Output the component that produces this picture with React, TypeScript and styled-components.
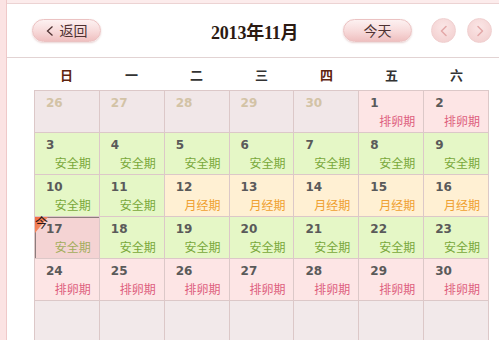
import React from "react";
import styled, { createGlobalStyle } from "styled-components";

const Global = createGlobalStyle`
  html, body { margin: 0; padding: 0; background: #ffffff; }
  body { font-family: "Liberation Sans", "Noto Sans CJK SC", sans-serif; }
  * { box-sizing: border-box; }
`;

const Page = styled.div`
  display: flex;
  width: 499px;
  height: 340px;
  overflow: hidden;
  background: #ffffff;
`;

const SideStrip = styled.div`
  width: 7px;
  flex: none;
  background: #fbe3e3;
  border-right: 1px solid #efc9c9;
`;

const Main = styled.div`
  flex: 1;
  display: flex;
  flex-direction: column;
`;

const TopStrip = styled.div`
  height: 4px;
  flex: none;
  background: #fcecec;
  border-bottom: 1px solid #ecd3d3;
`;

const Header = styled.div`
  height: 54px;
  flex: none;
  display: flex;
  align-items: center;
  padding-left: 25px;
  border-bottom: 1px solid #e2d3d3;
`;

const PillButton = styled.button<{ $w: number }>`
  width: ${(p) => p.$w}px;
  height: 23px;
  border-radius: 12px;
  border: 1px solid #ebc2c2;
  background: linear-gradient(#fdf1f1, #f7d9d9 55%, #efc0c0);
  box-shadow: 0 1px 2px rgba(190, 130, 130, 0.35);
  color: #4e3232;
  font-family: "Noto Sans CJK SC", sans-serif;
  font-size: 14px;
  line-height: 21px;
  padding: 0;
  display: flex;
  align-items: center;
  justify-content: center;
  gap: 6px;
  cursor: pointer;
`;

const Title = styled.div`
  margin-left: 110px;
  width: 92px;
  font-family: "Liberation Serif", "Noto Sans CJK SC", serif;
  font-weight: bold;
  font-size: 18px;
  color: #2b1a12;
  white-space: nowrap;
  letter-spacing: -0.2px;
`;

const TodayGap = styled.div`
  width: 40px;
`;

const CircleButton = styled.button<{ $ml: number }>`
  margin-left: ${(p) => p.$ml}px;
  width: 25px;
  height: 25px;
  border-radius: 50%;
  border: 1px solid #f0d0d0;
  background: radial-gradient(circle at 50% 35%, #fbe6e6, #f1cccc);
  padding: 0;
  display: flex;
  align-items: center;
  justify-content: center;
`;

const WeekRow = styled.div`
  height: 32px;
  flex: none;
  margin-left: 27px;
  width: 455px;
  display: grid;
  grid-template-columns: repeat(7, 1fr);
  align-items: center;
`;

const WeekLabel = styled.div<{ $brown?: boolean }>`
  text-align: center;
  font-family: "Noto Sans CJK SC", sans-serif;
  font-weight: bold;
  font-size: 13px;
  color: ${(p) => (p.$brown ? "#5e2410" : "#333333")};
`;

const Grid = styled.div`
  margin-left: 27px;
  width: 455px;
  display: grid;
  grid-template-columns: repeat(7, 1fr);
  grid-auto-rows: 41px;
  gap: 1px;
  background: #dcc8c8;
  border: 1px solid #dcc8c8;
`;

type Kind = "other" | "ovu" | "safe" | "mens" | "empty";

const bgFor: Record<Kind, string> = {
  other: "#f1e7e8",
  ovu: "#fde5e5",
  safe: "#e5f7c6",
  mens: "#fff0d3",
  empty: "#f2e9ea",
};

const labelColor: Record<string, string> = {
  ovu: "#de5f7e",
  safe: "#79a83a",
  mens: "#efa030",
};

const labelText: Record<string, string> = {
  ovu: "排卵期",
  safe: "安全期",
  mens: "月经期",
};

const Cell = styled.div<{ $kind: Kind; $today?: boolean }>`
  position: relative;
  background: ${(p) => (p.$today ? "#f4d3d3" : bgFor[p.$kind])};
  display: flex;
  flex-direction: column;
  padding: 5px 8px 0 11px;
  ${(p) => (p.$today ? `box-shadow: inset 1px 1px 0 #8c7c7c;` : "")}
`;

const DayNum = styled.div<{ $muted?: boolean }>`
  font-family: "DejaVu Sans", sans-serif;
  font-weight: bold;
  font-size: 12px;
  line-height: 15px;
  color: ${(p) => (p.$muted ? "#d3c3a6" : "#5a5a5a")};
`;

const DayLabel = styled.div<{ $color: string }>`
  margin-top: 2px;
  text-align: right;
  font-family: "Noto Sans CJK SC", sans-serif;
  font-size: 12px;
  line-height: 16px;
  color: ${(p) => p.$color};
`;

const TodayBadge = styled.div`
  position: absolute;
  left: 0;
  top: 0;
  width: 13px;
  height: 16px;
  background: linear-gradient(135deg, #f06a40, #f6a47e);
  clip-path: polygon(0 0, 100% 0, 0 100%);
`;

const TodayMark = styled.span`
  position: absolute;
  left: 0px;
  top: -3px;
  font-family: "Noto Sans CJK SC", sans-serif;
  font-size: 13px;
  line-height: 15px;
  color: #2a1a1a;
`;

const Chevron = ({ dir }: { dir: "l" | "r" }) => (
  <svg width="10" height="12" viewBox="0 0 10 12">
    <path
      d={dir === "l" ? "M7 1.5 L2.5 6 L7 10.5" : "M3 1.5 L7.5 6 L3 10.5"}
      fill="none"
      stroke="#e3a9a9"
      strokeWidth="1.6"
      strokeLinecap="round"
      strokeLinejoin="round"
    />
  </svg>
);

const BackArrow = () => (
  <svg width="8" height="12" viewBox="0 0 8 12">
    <path d="M6.5 1.5 L1.5 6 L6.5 10.5" fill="none" stroke="#4e3232" strokeWidth="1.3" />
  </svg>
);

type Day = { n?: number; kind: Kind; today?: boolean };

const days: Day[] = [
  { n: 26, kind: "other" },
  { n: 27, kind: "other" },
  { n: 28, kind: "other" },
  { n: 29, kind: "other" },
  { n: 30, kind: "other" },
  { n: 1, kind: "ovu" },
  { n: 2, kind: "ovu" },
  ...[3, 4, 5, 6, 7, 8, 9, 10, 11].map((n) => ({ n, kind: "safe" as Kind })),
  ...[12, 13, 14, 15, 16].map((n) => ({ n, kind: "mens" as Kind })),
  { n: 17, kind: "safe", today: true },
  ...[18, 19, 20, 21, 22, 23].map((n) => ({ n, kind: "safe" as Kind })),
  ...[24, 25, 26, 27, 28, 29, 30].map((n) => ({ n, kind: "ovu" as Kind })),
  ...Array.from({ length: 7 }, () => ({ kind: "empty" as Kind })),
];

const weekdays = ["日", "一", "二", "三", "四", "五", "六"];

export default function App() {
  return (
    <>
      <Global />
      <Page>
        <SideStrip />
        <Main>
          <TopStrip />
          <Header>
            <PillButton $w={69}>
              <BackArrow />
              <span>返回</span>
            </PillButton>
            <Title>2013年11月</Title>
            <TodayGap />
            <PillButton $w={69}>今天</PillButton>
            <CircleButton $ml={19}>
              <Chevron dir="l" />
            </CircleButton>
            <CircleButton $ml={11}>
              <Chevron dir="r" />
            </CircleButton>
          </Header>
          <WeekRow>
            {weekdays.map((w, i) => (
              <WeekLabel key={w} $brown={i === 0 || i === 4}>
                {w}
              </WeekLabel>
            ))}
          </WeekRow>
          <Grid>
            {days.map((d, i) => (
              <Cell key={i} $kind={d.kind} $today={d.today}>
                {d.today && (
                  <>
                    <TodayBadge />
                    <TodayMark>今</TodayMark>
                  </>
                )}
                {d.n !== undefined && <DayNum $muted={d.kind === "other"}>{d.n}</DayNum>}
                {labelText[d.kind] && (
                  <DayLabel $color={d.today ? "#a3ad5c" : labelColor[d.kind]}>
                    {labelText[d.kind]}
                  </DayLabel>
                )}
              </Cell>
            ))}
          </Grid>
        </Main>
      </Page>
    </>
  );
}
